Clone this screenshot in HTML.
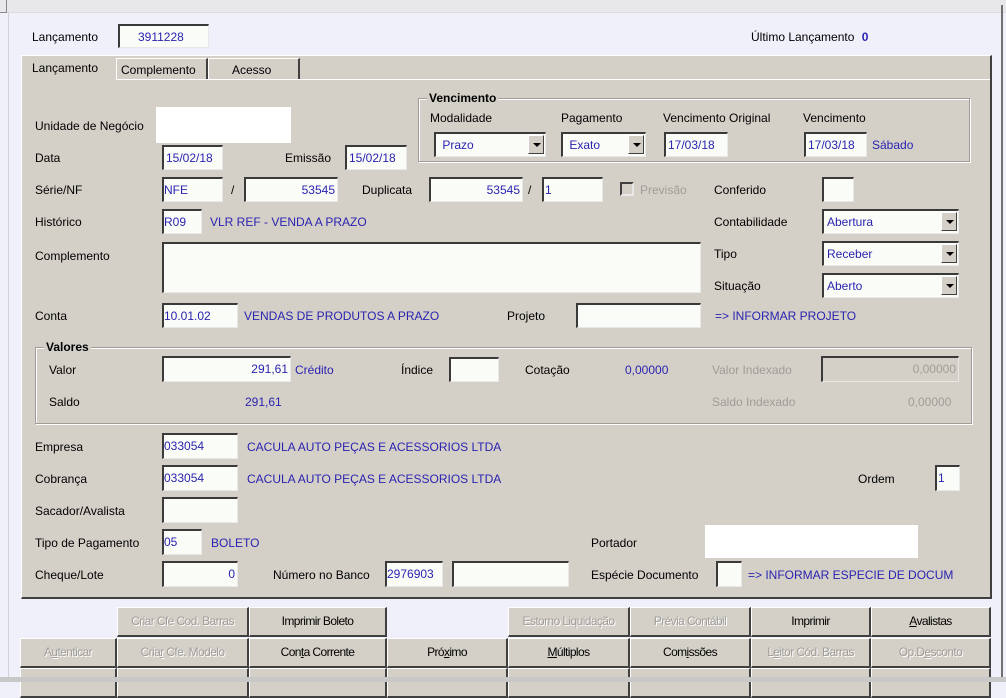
<!DOCTYPE html>
<html><head><meta charset="utf-8">
<style>
*{margin:0;padding:0;box-sizing:border-box}
body{width:1006px;height:682px;overflow:hidden;background:#f0f0fa;font-family:"Liberation Sans",sans-serif;font-size:12px;color:#000;position:relative}
.a{position:absolute;white-space:nowrap}
.l{position:absolute;white-space:nowrap;line-height:14px;transform:translateY(-7px)}
.b{color:#2a23b0}
.g{color:#a09c98}
.f{position:absolute;background:#fafdf7;border-top:2px solid #3a3a3a;border-left:2px solid #3a3a3a;border-right:1px solid #e8e8e8;border-bottom:1px solid #e8e8e8;color:#2a23b0;font-size:12px;line-height:22px;padding:0 2px;overflow:hidden;white-space:nowrap}
.r{text-align:right}
.sel{position:absolute;background:#fafdf7;border-top:2px solid #3a3a3a;border-left:2px solid #3a3a3a;border-right:1px solid #e8e8e8;border-bottom:1px solid #e8e8e8;color:#2a23b0;line-height:22px;padding-left:3px}
.sel i{position:absolute;right:1px;top:1px;width:16px;height:19px;background:#d4d0c8;border-top:1px solid #fff;border-left:1px solid #fff;border-right:1px solid #404040;border-bottom:1px solid #404040}
.sel i:after{content:"";position:absolute;left:4px;top:7px;border-left:4px solid transparent;border-right:4px solid transparent;border-top:4px solid #000}
.grp{position:absolute;border:1px solid #a09c98;box-shadow:inset 1px 1px 0 #fff,1px 1px 0 #fff}
.gt{position:absolute;background:#d4d0c8;font-weight:bold;padding:0 2px;line-height:14px}
.btn{position:absolute;height:30px;background:#d4d0c8;border-top:1px solid #fff;border-left:1px solid #fff;border-right:2px solid #404040;border-bottom:2px solid #404040;text-align:center;line-height:27px;font-size:12px;letter-spacing:-0.6px;color:#000}
.btn.d{color:#a09c98;text-shadow:1px 1px 0 #fff}
</style></head><body>
<div class="a" style="left:0;top:0;width:1006px;height:13px;background:#e8e8ea;border-bottom:1px solid #dcdce4"></div>
<div class="a" style="left:0;top:0;width:7px;height:13px;border:1px solid #888;border-left:none;border-top:none"></div>
<div class="a" style="left:8px;top:13px;width:1px;height:669px;background:#d0d0d8"></div>
<div class="a" style="left:1001px;top:5px;width:2px;height:677px;background:#707070"></div>

<div class="l" style="left:32px;top:37px">Lançamento</div>
<div class="f" style="left:118px;top:24px;width:91px;height:24px;padding-left:18px">3911228</div>
<div class="l" style="left:751px;top:37px">Último Lançamento <b class="b" style="margin-left:4px">0</b></div>

<div class="a" style="left:21px;top:55px;width:971px;height:544px;background:#d4d0c8;border-left:1px solid #fff;border-top:1px solid #fff;border-right:2px solid #404040;border-bottom:2px solid #404040"></div>
<div class="a" style="left:22px;top:79px;width:968px;height:1px;background:#fff"></div>
<div class="a" style="left:22px;top:56px;width:94px;height:24px;background:#d4d0c8"></div>
<div class="l" style="left:32px;top:68px">Lançamento</div>
<div class="a" style="left:116px;top:58px;width:92px;height:21px;border-left:1px solid #fff;border-top:1px solid #fff;border-right:2px solid #404040"></div>
<div class="l" style="left:121px;top:70px">Complemento</div>
<div class="a" style="left:208px;top:58px;width:92px;height:21px;border-left:1px solid #fff;border-top:1px solid #fff;border-right:2px solid #404040"></div>
<div class="l" style="left:232px;top:70px">Acesso</div>

<div class="l" style="left:35px;top:126px">Unidade de Negócio</div>
<div class="a" style="left:156px;top:107px;width:135px;height:36px;background:#fff"></div>

<div class="grp" style="left:418px;top:98px;width:552px;height:64px"></div>
<div class="gt" style="left:427px;top:91px">Vencimento</div>
<div class="l" style="left:430px;top:118px">Modalidade</div>
<div class="l" style="left:561px;top:118px">Pagamento</div>
<div class="l" style="left:663px;top:118px">Vencimento Original</div>
<div class="l" style="left:803px;top:118px">Vencimento</div>
<div class="sel" style="left:434px;top:132px;width:112px;height:25px">&nbsp;Prazo<i></i></div>
<div class="sel" style="left:561px;top:132px;width:85px;height:25px">&nbsp;Exato<i></i></div>
<div class="f" style="left:664px;top:132px;width:64px;height:25px">17/03/18</div>
<div class="f" style="left:804px;top:132px;width:63px;height:25px">17/03/18</div>
<div class="l b" style="left:872px;top:145px">Sábado</div>

<div class="l" style="left:35px;top:158px">Data</div>
<div class="f" style="left:162px;top:145px;width:61px;height:25px">15/02/18</div>
<div class="l" style="left:285px;top:158px">Emissão</div>
<div class="f" style="left:345px;top:145px;width:62px;height:25px">15/02/18</div>

<div class="l" style="left:35px;top:190px">Série/NF</div>
<div class="f" style="left:162px;top:177px;width:61px;height:25px;padding-left:0">NFE</div>
<div class="l" style="left:231px;top:190px">/</div>
<div class="f r" style="left:244px;top:177px;width:94px;height:25px">53545</div>
<div class="l" style="left:362px;top:190px">Duplicata</div>
<div class="f r" style="left:429px;top:177px;width:94px;height:25px">53545</div>
<div class="l" style="left:528px;top:190px">/</div>
<div class="f" style="left:542px;top:177px;width:61px;height:25px;padding-left:1px">1</div>
<div class="a" style="left:620px;top:182px;width:14px;height:14px;border:2px solid #404040;border-right-color:#e8e8e8;border-bottom-color:#e8e8e8;background:#d4d0c8"></div>
<div class="l g" style="left:640px;top:190px">Previsão</div>
<div class="l" style="left:714px;top:190px">Conferido</div>
<div class="f" style="left:822px;top:177px;width:32px;height:25px"></div>

<div class="l" style="left:35px;top:222px">Histórico</div>
<div class="f" style="left:162px;top:209px;width:40px;height:25px;padding-left:0">R09</div>
<div class="l b" style="left:210px;top:222px">VLR REF - VENDA A PRAZO</div>
<div class="l" style="left:714px;top:222px">Contabilidade</div>
<div class="sel" style="left:822px;top:209px;width:137px;height:25px">Abertura<i></i></div>

<div class="l" style="left:35px;top:256px">Complemento</div>
<div class="f" style="left:162px;top:242px;width:539px;height:51px"></div>
<div class="l" style="left:714px;top:254px">Tipo</div>
<div class="sel" style="left:822px;top:241px;width:137px;height:25px">Receber<i></i></div>
<div class="l" style="left:714px;top:286px">Situação</div>
<div class="sel" style="left:822px;top:273px;width:137px;height:25px">Aberto<i></i></div>

<div class="l" style="left:35px;top:316px">Conta</div>
<div class="f" style="left:162px;top:303px;width:76px;height:25px;padding-left:0">10.01.02</div>
<div class="l b" style="left:244px;top:316px">VENDAS DE PRODUTOS A PRAZO</div>
<div class="l" style="left:507px;top:316px">Projeto</div>
<div class="f" style="left:576px;top:303px;width:125px;height:25px"></div>
<div class="l b" style="left:715px;top:316px">=&gt; INFORMAR PROJETO</div>

<div class="grp" style="left:35px;top:347px;width:937px;height:77px"></div>
<div class="gt" style="left:44px;top:340px">Valores</div>
<div class="l" style="left:49px;top:370px">Valor</div>
<div class="f r" style="left:162px;top:356px;width:129px;height:26px">291,61</div>
<div class="l b" style="left:295px;top:370px">Crédito</div>
<div class="l" style="left:401px;top:370px">Índice</div>
<div class="f" style="left:449px;top:357px;width:50px;height:25px"></div>
<div class="l" style="left:525px;top:370px">Cotação</div>
<div class="l b" style="left:625px;top:370px">0,00000</div>
<div class="l g" style="left:712px;top:370px">Valor Indexado</div>
<div class="f r" style="left:821px;top:356px;width:138px;height:26px;background:#d4d0c8;color:#a09c98">0,00000</div>
<div class="l" style="left:49px;top:402px">Saldo</div>
<div class="l b" style="left:245px;top:402px">291,61</div>
<div class="l g" style="left:712px;top:402px">Saldo Indexado</div>
<div class="l g" style="left:908px;top:402px">0,00000</div>

<div class="l" style="left:35px;top:447px">Empresa</div>
<div class="f" style="left:162px;top:433px;width:76px;height:26px;padding-left:0">033054</div>
<div class="l b" style="left:247px;top:447px">CACULA AUTO PEÇAS E ACESSORIOS LTDA</div>
<div class="l" style="left:35px;top:479px">Cobrança</div>
<div class="f" style="left:162px;top:465px;width:76px;height:26px;padding-left:0">033054</div>
<div class="l b" style="left:247px;top:479px">CACULA AUTO PEÇAS E ACESSORIOS LTDA</div>
<div class="l" style="left:858px;top:479px">Ordem</div>
<div class="f" style="left:935px;top:465px;width:25px;height:26px;padding-left:1px">1</div>
<div class="l" style="left:35px;top:511px">Sacador/Avalista</div>
<div class="f" style="left:162px;top:497px;width:76px;height:26px"></div>
<div class="l" style="left:35px;top:543px">Tipo de Pagamento</div>
<div class="f" style="left:162px;top:529px;width:40px;height:26px;padding-left:0">05</div>
<div class="l b" style="left:211px;top:543px">BOLETO</div>
<div class="l" style="left:591px;top:543px">Portador</div>
<div class="a" style="left:705px;top:525px;width:213px;height:33px;background:#fff"></div>
<div class="l" style="left:35px;top:575px">Cheque/Lote</div>
<div class="f r" style="left:162px;top:561px;width:76px;height:26px">0</div>
<div class="l" style="left:273px;top:575px">Número no Banco</div>
<div class="f" style="left:385px;top:561px;width:58px;height:26px;padding-left:0">2976903</div>
<div class="f" style="left:452px;top:561px;width:117px;height:26px"></div>
<div class="l" style="left:591px;top:575px">Espécie Documento</div>
<div class="f" style="left:716px;top:561px;width:26px;height:26px"></div>
<div class="l b" style="left:748px;top:575px">=&gt; INFORMAR ESPECIE DE DOCUM</div>

<div class="btn d" style="left:117px;top:607px;width:132px">Criar Cfe Cod. Barras</div>
<div class="btn" style="left:249px;top:607px;width:138px">Imprimir Boleto</div>
<div class="btn d" style="left:508px;top:607px;width:122px">Estorno Liquidação</div>
<div class="btn d" style="left:630px;top:607px;width:121px">Prévia Contábil</div>
<div class="btn" style="left:751px;top:607px;width:120px">Imprimir</div>
<div class="btn" style="left:871px;top:607px;width:120px"><u>A</u>valistas</div>

<div class="btn d" style="left:20px;top:638px;width:97px">A<u>u</u>tenticar</div>
<div class="btn d" style="left:117px;top:638px;width:132px">Cria<u>r</u> Cfe. Modelo</div>
<div class="btn" style="left:249px;top:638px;width:138px">Con<u>t</u>a Corrente</div>
<div class="btn" style="left:387px;top:638px;width:121px">Pró<u>x</u>imo</div>
<div class="btn" style="left:508px;top:638px;width:122px"><u>M</u>últiplos</div>
<div class="btn" style="left:630px;top:638px;width:121px">Com<u>i</u>ssões</div>
<div class="btn d" style="left:751px;top:638px;width:120px">L<u>e</u>itor Cód. Barras</div>
<div class="btn d" style="left:871px;top:638px;width:120px">Op.D<u>e</u>sconto</div>

<div class="btn" style="left:20px;top:668px;width:97px"></div>
<div class="btn" style="left:117px;top:668px;width:132px"></div>
<div class="btn" style="left:249px;top:668px;width:138px"></div>
<div class="btn" style="left:387px;top:668px;width:121px"></div>
<div class="btn" style="left:508px;top:668px;width:122px"></div>
<div class="btn" style="left:630px;top:668px;width:121px"></div>
<div class="btn" style="left:751px;top:668px;width:120px"></div>
<div class="btn" style="left:871px;top:668px;width:120px"></div>
<div class="a" style="left:0;top:677px;width:1006px;height:5px;background:#c8c8c8"></div>
</body></html>
